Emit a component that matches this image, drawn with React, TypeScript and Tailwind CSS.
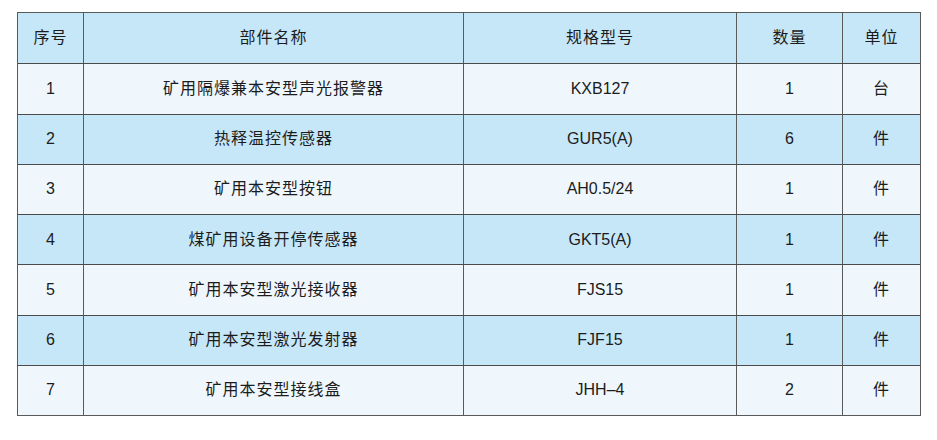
import React from 'react';

const rows = [
    ['1', '矿用隔爆兼本安型声光报警器', 'KXB127', '1', '台'],
    ['2', '热释温控传感器', 'GUR5(A)', '6', '件'],
    ['3', '矿用本安型按钮', 'AH0.5/24', '1', '件'],
    ['4', '煤矿用设备开停传感器', 'GKT5(A)', '1', '件'],
    ['5', '矿用本安型激光接收器', 'FJS15', '1', '件'],
    ['6', '矿用本安型激光发射器', 'FJF15', '1', '件'],
    ['7', '矿用本安型接线盒', 'JHH–4', '2', '件'],
];

const header = ['序号', '部件名称', '规格型号', '数量', '单位'];

const Row: React.FC<{ cells: string[]; blue: boolean; first?: boolean }> = ({ cells, blue, first }) => (
    <div
        className={`grid grid-cols-[66px_380px_273px_106px_77px] h-[50.25px] ${blue ? 'bg-[#c6e7f8]' : 'bg-[#eff7fd]'} ${first ? '' : 'border-t border-[#4a4a4a]'}`}
    >
        {cells.map((c, i) => (
            <div
                key={i}
                className={`flex items-center justify-center ${i < 4 ? 'border-r border-[#5a5a5a]' : ''} ${/[\u4e00-\u9fff]/.test(c) ? 'tracking-[1px]' : ''}`}
            >
                {c}
            </div>
        ))}
    </div>
);

export default function App() {
    return (
        <div
            className="w-[937px] h-[440px] bg-white pt-[12px] pl-[17px] text-[16px] text-[#1c1c1c]"
            style={{ fontFamily: '"Liberation Sans", "Noto Sans CJK SC", sans-serif' }}
        >
            <div className="w-[904px] border border-[#5a5a5a]">
                <Row cells={header} blue first />
                {rows.map((r, i) => (
                    <Row key={i} cells={r} blue={i % 2 === 1} />
                ))}
            </div>
        </div>
    );
}
